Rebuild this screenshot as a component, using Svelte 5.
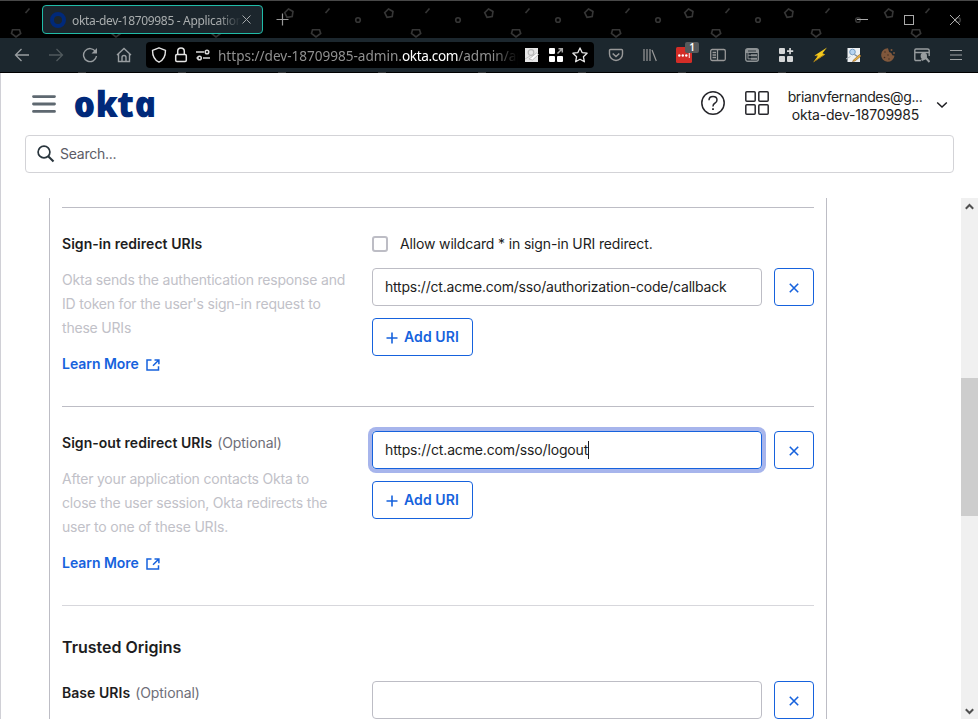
<script>
  const sections = [
    {
      id: 'signin', title: 'Sign-in redirect URIs', optional: false, wildcard: true,
      lines: ['Okta sends the authentication response and', 'ID token for the user\'s sign-in request to', 'these URIs'],
      uri: 'https://ct.acme.com/sso/authorization-code/callback', focused: false
    },
    {
      id: 'signout', title: 'Sign-out redirect URIs', optional: true, wildcard: false,
      lines: ['After your application contacts Okta to', 'close the user session, Okta redirects the', 'user to one of these URIs.'],
      uri: 'https://ct.acme.com/sso/logout', focused: true
    }
  ];
</script>

{#snippet remove()}
  <button class="remove" aria-label="Remove">
    <svg width="10" height="10" viewBox="0 0 10 10"><path d="M.8 .8l8.4 8.4M9.2 .8L.8 9.2" stroke="#1662dd" stroke-width="1.6" /></svg>
  </button>
{/snippet}

<div class="window">
  <div class="chrome">
    <svg class="theme" width="978" height="73">
      <defs>
        <pattern id="doodles" width="100" height="73" patternUnits="userSpaceOnUse">
          <g fill="none" stroke="#353535" stroke-width="1.6">
            <path d="M88.500 9l4.500 2.500-.8 5-5.200 .8-2.300-4.600z" />
            <path d="M12.500 29.800h7l1.200 3.700-4.700 3.500-4.500-3.500z" />
            <circle cx="58" cy="20" r="2.300" />
            <path d="M25.500 13l4-4.500" />
            <path d="M78 72.500h8" />
          </g>
        </pattern>
      </defs>
      <rect width="978" height="73" fill="#000" />
      <rect width="978" height="73" fill="url(#doodles)" />
      <rect width="978" height="1" fill="#484848" />
    </svg>
    <div class="tabs">
      <div class="tab">
        <svg width="16" height="16" viewBox="0 0 16 16"><circle cx="8" cy="8" r="6" fill="none" stroke="#00297a" stroke-width="4" /></svg>
        <span class="tabname">okta-dev-18709985 - Application</span>
        <svg width="9" height="9" viewBox="0 0 9 9"><path d="M.5 .5l8 8M8.500 .5l-8 8" stroke="#a4a8aa" /></svg>
      </div>
      <svg class="newtab" width="13" height="13" viewBox="0 0 13 13"><path d="M6.500 .5v12M.5 6.500h12" stroke="#999" stroke-width="1.200" /></svg>
      <svg class="winctl" width="104" height="14" viewBox="0 0 104 14" fill="none" stroke="#aaa"><path d="M0 6.500h11M93 2l10 10M103 2L93 12" /><rect x="47.500" y="2.500" width="9" height="9" /></svg>
    </div>
    <div class="toolbar">
      <div class="nav">
        <svg width="16" height="16" viewBox="0 0 16 16" fill="none" stroke="#999ea1" stroke-width="1.300"><path d="M15 8H2M7.500 2L1.500 8l6 6" /></svg>
        <svg width="16" height="16" viewBox="0 0 16 16" fill="none" stroke="#50595d" stroke-width="1.300"><path d="M1 8h13M8.500 2l6 6-6 6" /></svg>
        <svg width="16" height="16" viewBox="0 0 16 16" fill="none" stroke="#999ea1" stroke-width="1.400"><path d="M13.500 4.500A6.500 6.500 0 1 0 14.500 9" /><path d="M15 1v5.500H9.500z" fill="#999ea1" stroke="none" /></svg>
        <svg width="16" height="16" viewBox="0 0 16 16" fill="none" stroke="#999ea1" stroke-width="1.400"><path d="M1 8l7-6.500L15 8M2.500 7v7.500h11V7M6 14.500v-4a2 2 0 0 1 4 0v4" /></svg>
      </div>
      <div class="urlbar">
        <svg width="16" height="16" viewBox="0 0 16 16" fill="none" stroke="#e5e5e5" stroke-width="1.400"><path d="M8 .8l6.500 2.500c0 6-1.500 9.700-6.500 11.900C3 13 1.500 9.300 1.500 3.300z" stroke-linejoin="round" /></svg>
        <svg width="16" height="16" viewBox="0 0 16 16" fill="none" stroke="#e5e5e5" stroke-width="1.500"><rect x="2.700" y="7.500" width="10.600" height="7" rx="1.200" /><path d="M4.700 7.500V4.300a3.300 3.300 0 0 1 6.600 0v3.200" /></svg>
        <svg width="16" height="16" viewBox="0 0 16 16" fill="none" stroke="#d8d8d8" stroke-width="1.500"><path d="M1 5h8M8 11h7M1.500 11h2" /><circle cx="12" cy="5" r="1.800" /><circle cx="4.500" cy="11" r="1.800" /></svg>
        <span class="url">https://dev-18709985-admin.<b>okta.com</b>/admin/ap</span>
        <svg width="16" height="16" viewBox="0 0 16 16"><path d="M1 1h13v14H1z" fill="#e7e7e7" /><circle cx="7" cy="5.500" r="2.800" fill="none" stroke="#b8b8b8" stroke-width="1.200" /><path d="M5 12l2-1.500L12.500 6l2 1.500-6 5.500z" fill="#fff" stroke="#aaa" stroke-width=".7" /><path d="M1 12l5-3" stroke="#c4c4c4" /></svg>
        <svg width="16" height="16" viewBox="0 0 16 16"><g fill="#fff"><rect x="1" y="1" width="6" height="6" rx="1" /><rect x="1" y="9" width="6" height="6" rx="1" /><rect x="9" y="9" width="6" height="6" rx="1" /></g><path d="M9.500 6.500L14 2M10.500 1.700H14.300V5.500" stroke="#aaa" stroke-width="1.500" fill="none" /></svg>
        <svg width="16" height="16" viewBox="0 0 16 16"><path d="M8 .9l2.100 4.700 5 .6-3.700 3.500 1 5.100L8 12.300l-4.400 2.500 1-5.100L.9 6.200l5-.6z" fill="none" stroke="#e8e8e8" stroke-width="1.300" stroke-linejoin="round" /></svg>
      </div>
      <div class="exts">
        <svg width="16" height="16" viewBox="0 0 16 16" fill="none" stroke="#999" stroke-width="1.400"><path d="M2.500 2.500h11q1 0 1 1V7a6.500 6.500 0 0 1-13 0V3.500q0-1 1-1z" /><path d="M4.700 6.500L8 9.500l3.300-3" stroke-width="1.600" /></svg>
        <svg width="16" height="16" viewBox="0 0 16 16" fill="none" stroke="#999" stroke-width="1.200"><path d="M2 2v12M5 2v12M8 2v12M10 3l4.300 11" /></svg>
        <div class="badgewrap"><svg width="16" height="16" viewBox="0 0 16 16"><rect width="16" height="16" rx="1.500" fill="#d32d27" /><g fill="#fff"><circle cx="3.300" cy="8.500" r="1.200" /><circle cx="6.800" cy="8.500" r="1.200" /><circle cx="10.300" cy="8.500" r="1.200" /><path d="M12.800 6h.9v5h-.9z" /></g></svg><span class="badge">1</span></div>
        <svg width="16" height="16" viewBox="0 0 16 16" fill="none" stroke="#999" stroke-width="1.300"><rect x=".7" y="2.500" width="14.600" height="11" rx="1.500" /><path d="M7.500 2.500v11M2.500 5.500H6M2.500 8H6M2.500 10.500H6" /></svg>
        <svg width="16" height="16" viewBox="0 0 16 16"><rect x="1.700" y="1.700" width="12.600" height="12.600" rx="2" fill="none" stroke="#8d9294" stroke-width="1.400" /><path d="M2 2h12v4H2z" fill="#8d9294" /><path d="M4 4h8" stroke="#303b40" /><path d="M4 6v5.800h3M4 8.300h3" stroke="#8d9294" fill="none" /><path d="M7 7.300h6v2H7zM7 10.800h6v2H7z" fill="#8d9294" /></svg>
        <svg width="16" height="16" viewBox="0 0 16 16" fill="#d5d7d8"><rect x="1" y="1" width="6" height="6" rx="1" /><rect x="1" y="9" width="6" height="6" rx="1" /><rect x="9" y="9" width="6" height="6" rx="1" /><path d="M11.200 1h1.700v2.300h2.300V5h-2.300v2.200h-1.700V5H9V3.300h2.200z" /></svg>
        <svg width="16" height="16" viewBox="0 0 16 16"><path d="M15 .5L10.500 6.200l2.700 1.200L1 15.500 5.500 9.500 2.500 8.500z" fill="#f2c91d" /><path d="M2 14.500L12.500 7.500M6 9l-2.500-.8" stroke="#a16c11" stroke-width=".8" fill="none" /></svg>
        <svg width="16" height="16" viewBox="0 0 16 16"><path d="M1.500 1h12.500v14H1.500z" fill="#edf0f2" /><circle cx="6.500" cy="5" r="2.800" fill="#b6d4f1" stroke="#6d95bd" stroke-width=".9" /><path d="M8.500 7.500l3 2" stroke="#7b868d" stroke-width="1.200" /><path d="M7 13.500l6.500-6 1.500 1.500-6 5-2.500.5z" fill="#e8b342" stroke="#8a5b27" stroke-width=".6" /><path d="M0 12l4.500-2.500" stroke="#aeb8bf" /></svg>
        <svg width="16" height="16" viewBox="0 0 16 16"><path d="M8 1.300a6.700 6.700 0 1 0 6.500 7.500l-2.200-.6-1-2.200-2.200-1z" fill="#80583c" /><g fill="#3b2a20"><circle cx="5" cy="5" r=".7" /><circle cx="8" cy="8" r=".7" /><circle cx="4.500" cy="10.500" r=".8" /><circle cx="9" cy="12" r=".7" /></g><g fill="#80583c"><circle cx="11.500" cy="3" r="1" /><circle cx="14" cy="6" r=".9" /></g></svg>
        <svg width="16" height="16" viewBox="0 0 16 16" fill="none" stroke="#989d9f" stroke-width="1.400"><path d="M7 13.500H2q-1.200 0-1.200-1.200V3.200Q.8 2 2 2h11.500q1.700 0 1.700 1.500V9M1 5.500h14" /><circle cx="9.800" cy="9" r="2.500" fill="#989d9f" /><path d="M11.500 10.500l4 4.500M7.500 13l4.500-2" stroke-width="2" /></svg>
        <svg width="16" height="16" viewBox="0 0 16 16" stroke="#a0a4a6" stroke-width="1.200"><path d="M2 3.500h12M2 8h12M2 12.500h12" /></svg>
      </div>
    </div>
  </div>

  <div class="page">
    <header>
      <svg class="burger" width="24" height="18" viewBox="0 0 24 18" stroke="#5e6870" stroke-width="2.800" stroke-linecap="round"><path d="M1.500 1.600h21M1.500 9h21M1.500 16.400h21" /></svg>
      <svg class="logo" width="84" height="40" viewBox="0 0 84 40"><text transform="translate(1.500 33.200) skewX(12)" textLength="83" lengthAdjust="spacingAndGlyphs">okta</text></svg>
      <div class="actions">
        <svg width="24" height="24" viewBox="0 0 24 24" fill="none" stroke="#26262b" stroke-width="1.500"><circle cx="12" cy="12" r="11.200" /><path d="M8 9.200Q8 5.500 12 5.500t4 3.500q0 2.200-2.200 3.200-1.800.8-1.800 3v.3" /><path d="M12 17.200V19" stroke-width="1.800" /></svg>
        <svg width="24" height="24" viewBox="0 0 24 24" fill="none" stroke="#26262b" stroke-width="1.500"><rect x=".8" y=".8" width="9.400" height="9.400" rx="1" /><rect x="13.800" y=".8" width="9.400" height="9.400" rx="1" /><rect x=".8" y="13.800" width="9.400" height="9.400" rx="1" /><rect x="13.800" y="13.800" width="9.400" height="9.400" rx="1" /></svg>
        <div class="account"><span class="mail">brianvfernandes@g...</span><span class="org">okta-dev-18709985</span></div>
        <svg class="caret" width="12" height="8" viewBox="0 0 12 8" fill="none" stroke="#1d1d21" stroke-width="1.500"><path d="M1.200 1.500L6 6l4.800-4.500" /></svg>
      </div>
    </header>
    <div class="search">
      <svg width="18" height="18" viewBox="0 0 18 18" fill="none" stroke="#29353d" stroke-width="1.700"><circle cx="7" cy="7" r="5.900" /><path d="M11.200 11.200l5.300 5.300" stroke-width="2.100" /></svg>
      <span>Search...</span>
    </div>
    <main>
      <div class="panel">
        {#each sections as s (s.id)}
          <section class={s.id}>
            <div class="left">
              <h3><span class="label">{s.title}</span>{#if s.optional}<span class="opt">(Optional)</span>{/if}</h3>
              <p>{#each s.lines as line}<span>{line}</span>{/each}</p>
              <div class="more"><span>Learn More</span>
                <svg width="14" height="12" viewBox="0 0 14 12" fill="none" stroke="#1662dd" stroke-width="1.500"><path d="M5.500 1.100H1v10h11.500V7.300M8.500 .9h4.400v4.400M12.600 1.200L7 6.800" /></svg>
              </div>
            </div>
            <div class="right">
              {#if s.wildcard}<div class="check"><i></i><span>Allow wildcard * in sign-in URI redirect.</span></div>{/if}
              <div class="field"><div class="input" class:focused={s.focused}><span>{s.uri}</span></div>{@render remove()}</div>
              <button class="add"><svg width="12" height="12" viewBox="0 0 12 12"><path d="M6 .5v11M.5 6h11" stroke="#1662dd" stroke-width="1.600" /></svg><span>Add URI</span></button>
            </div>
          </section>
        {/each}
        <div class="origins">
          <h2><span>Trusted Origins</span></h2>
          <div class="base">
            <h3><span class="label">Base URIs</span><span class="opt">(Optional)</span></h3>
            <div class="field"><div class="input"></div>{@render remove()}</div>
          </div>
        </div>
      </div>
      <div class="scrollbar">
        <svg width="9" height="7" viewBox="0 0 9 7"><path d="M.8 5.700L4.500 2l3.700 3.700" fill="none" stroke="#505050" stroke-width="2" /></svg>
        <div class="thumb"></div>
        <svg width="9" height="7" viewBox="0 0 9 7"><path d="M.8 1.300L4.500 5l3.700-3.700" fill="none" stroke="#505050" stroke-width="2" /></svg>
      </div>
    </main>
  </div>
</div>

<style>
  :global(body) { margin: 0; overflow: hidden; }
  * { box-sizing: border-box; }
  .window { width: 978px; height: 719px; overflow: hidden; display: flex; flex-direction: column; font: 14px/18px Inter, "Liberation Sans", sans-serif; color: #1d1d21; background: #fff; }
  svg { display: block; flex: none; }
  span { white-space: nowrap; }
  .chrome { height: 73px; position: relative; font-family: "Noto Sans", "Open Sans", sans-serif; flex: none; }
  .theme { position: absolute; inset: 0; }
  .tabs { position: relative; height: 38px; display: flex; align-items: center; padding: 1px 16px 0 42px; }
  .tab { width: 221px; height: 29px; border: 1px solid #20bca8; border-radius: 4px; background: #1c262d; display: flex; align-items: center; padding: 0 10px 0 7px; }
  .tabname { margin: 2px 0 0 6px; width: 170px; overflow: hidden; font-size: 12px; letter-spacing: -.32px; color: #a9adae; mask-image: linear-gradient(90deg, #000 146px, transparent 169px); }
  .newtab { margin-left: 13px; }
  .winctl { margin: 0 1px 0 auto; }
  .toolbar { position: relative; height: 34px; background: #1c272e; display: flex; align-items: center; }
  .nav { display: flex; gap: 18px; padding-left: 14px; width: 146px; }
  .urlbar { width: 448px; height: 26px; background: #000; border-radius: 4px; display: flex; align-items: center; gap: 6px; padding: 0 6px 0 5px; }
  .url { font-size: 13.6px; letter-spacing: -.03px; line-height: 20px; width: 300px; flex: none; overflow: hidden; margin: 2px 0 0 1px; color: #909090; mask-image: linear-gradient(90deg, #000 275px, transparent 300px); }
  .urlbar svg:nth-of-type(n+4) { margin-right: 2px; }
  .url b { font-weight: 400; color: #fff; letter-spacing: -.35px; }
  .exts { display: flex; gap: 18px; margin-left: 14px; }
  .badgewrap { position: relative; }
  .badge { position: absolute; left: 9px; top: -5px; width: 14px; height: 11px; background: #56595b; border-radius: 2px; color: #fff; font: 600 10px/11px "Noto Sans", sans-serif; text-align: center; }
  .page { flex: 1; display: flex; flex-direction: column; border-left: 1px solid #d0d0d6; min-height: 0; }
  header { height: 62px; display: flex; align-items: center; padding: 0 30px 0 31px; flex: none; }
  .logo { margin-left: 18px; overflow: visible; }
  .logo text { font: italic 800 36px "Open Sans", "Noto Sans", sans-serif; fill: #00297a; }
  .actions { margin: 0 0 2px auto; display: flex; align-items: center; gap: 20px; }
  .account { display: flex; flex-direction: column; align-items: center; width: 136px; margin: 5px -7px 0 -2px; }
  .caret { margin-top: 3px; }
  .mail { letter-spacing: -.4px; }
  .org { letter-spacing: -.2px; padding-left: 1px; }
  .search { margin: 0 24px 0 24px; height: 38px; border: 1px solid #d3d3d7; border-radius: 4px; flex: none; display: flex; align-items: center; padding-left: 11px; gap: 5px; color: #5c5c66; letter-spacing: -.25px; }
  main { margin-top: 25px; flex: 1; display: flex; min-height: 0; }
  .panel { margin-left: 48px; width: 778px; border: solid #bdbdc5; border-width: 0 1px; padding: 9px 12px 0; overflow: hidden; }
  section { display: flex; border-top: 1px solid #bdbdc5; height: 199px; padding-top: 24px; }
  .left, .base h3 { width: 310px; flex: none; }
  h3 { display: flex; align-items: center; height: 24px; margin: 0; font-size: 14px; }
  .label { font-weight: 600; letter-spacing: .04px; }
  .opt { font-weight: 400; color: #6e6e78; margin-left: 5px; letter-spacing: -.06px; }
  p { margin: 12px 0; display: flex; flex-direction: column; line-height: 24px; color: #c1c1c8; letter-spacing: -.2px; }
  .more { display: flex; align-items: center; height: 24px; gap: 7px; color: #1662dd; font-weight: 600; letter-spacing: -.04px; }
  .more svg { margin-top: 2px; }
  .check { display: flex; align-items: center; height: 24px; margin-bottom: 12px; }
  .check i { width: 16px; height: 16px; border: 2px solid #bdbdc5; border-radius: 3px; margin-right: 12px; }
  .check span { letter-spacing: -.15px; }
  .field { display: flex; gap: 12px; }
  .input { width: 390px; height: 38px; border: 1px solid #bdbdc5; border-radius: 4px; display: flex; align-items: center; padding-left: 12px; letter-spacing: -.21px; }
  .focused { border-color: #1662dd; box-shadow: 0 0 0 4px #a7b5ec; letter-spacing: -.15px; }
  .focused span { border-right: 1px solid #1d1d21; }
  button { font: inherit; background: #fff; border: 1px solid #1662dd; border-radius: 4px; color: #1662dd; display: flex; align-items: center; justify-content: center; height: 38px; padding: 0; }
  .remove { width: 40px; padding-top: 2px; }
  .add { width: 101px; gap: 6px; margin-top: 12px; font-weight: 600; letter-spacing: .1px; }
  .add svg { margin-top: 2px; }
  .origins { border-top: 1px solid #d7d7dc; padding-top: 29px; }
  .origins h2 { font-size: 16px; line-height: 24px; font-weight: 600; margin: 0 0 22px; }
  .base { display: flex; }
  .scrollbar { margin-left: auto; width: 17px; background: #f0f0f0; display: flex; flex-direction: column; align-items: center; padding: 5px 0 4px; }
  .thumb { width: 17px; height: 138px; background: #cdcdcd; margin: 168px 0 auto; }
</style>
